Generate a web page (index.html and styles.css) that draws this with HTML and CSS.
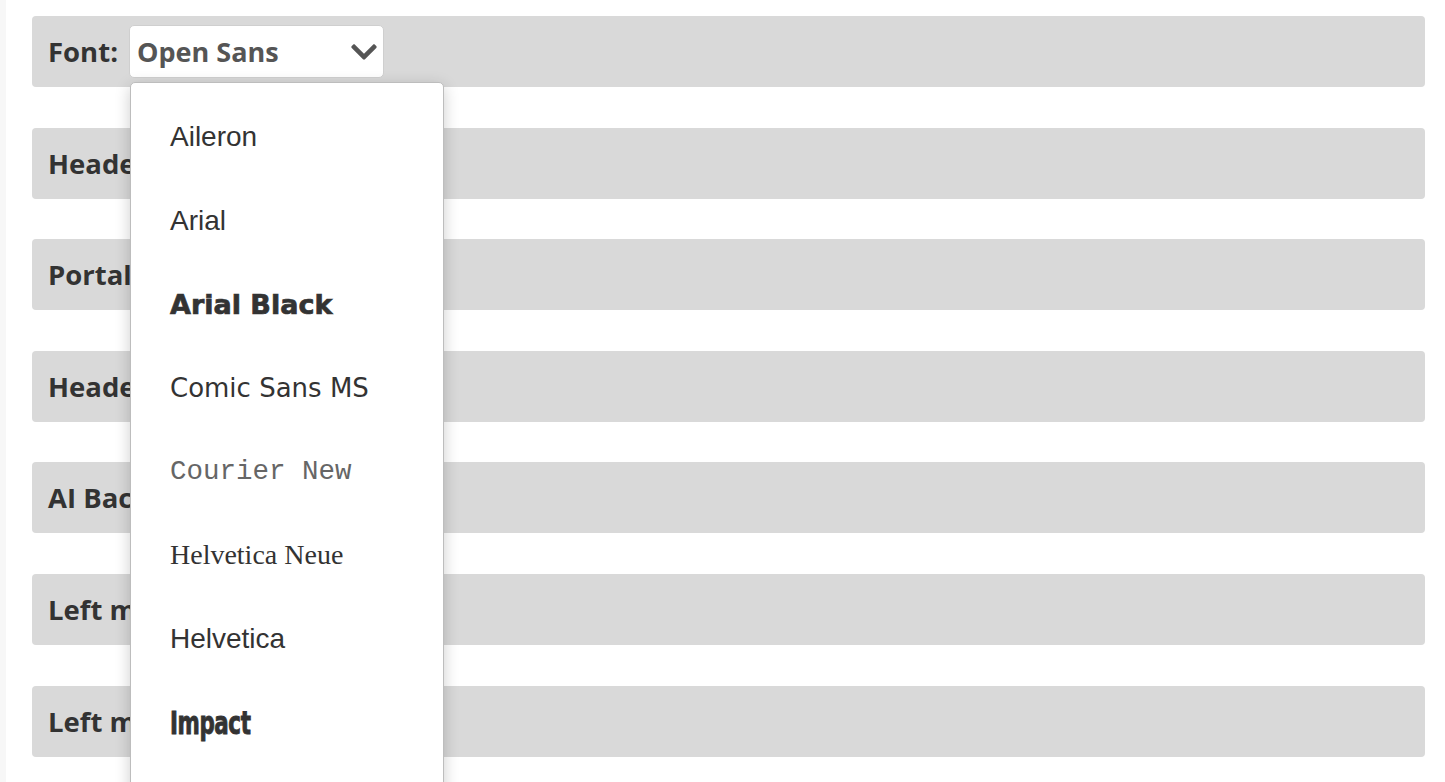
FILE: index.html
```html
<!DOCTYPE html>
<html>
<head>
<meta charset="utf-8">
<link rel="stylesheet" href="styles.css">
</head>
<body>
<div class="panel">
  <div class="row">
    <span class="label">Font:</span>
    <div class="select-wrap">
      <div class="select">
        <span class="select-value">Open Sans</span>
        <svg class="chev" width="26" height="30" viewBox="0 0 448 512"><path fill="#555" d="M207.029 381.476L12.686 187.132c-9.373-9.373-9.373-24.569 0-33.941l22.667-22.667c9.357-9.357 24.522-9.375 33.901-.04L224 284.505l154.745-154.021c9.379-9.335 24.544-9.317 33.901.04l22.667 22.667c9.373 9.373 9.373 24.569 0 33.941L240.971 381.476c-9.373 9.372-24.569 9.372-33.942 0z"/></svg>
      </div>
      <ul class="menu">
        <li class="item f-aileron">Aileron</li>
        <li class="item f-arial">Arial</li>
        <li class="item f-arialblack">Arial Black</li>
        <li class="item f-comic">Comic Sans MS</li>
        <li class="item f-courier">Courier New</li>
        <li class="item f-hneue">Helvetica Neue</li>
        <li class="item f-helvetica">Helvetica</li>
        <li class="item f-impact"><span class="impact-text">Impact</span></li>
      </ul>
    </div>
  </div>
  <div class="row"><span class="label">Header color:</span></div>
  <div class="row"><span class="label">Portal color:</span></div>
  <div class="row"><span class="label">Header text:</span></div>
  <div class="row"><span class="label">AI Background:</span></div>
  <div class="row"><span class="label">Left menu:</span></div>
  <div class="row"><span class="label">Left menu text:</span></div>
</div>
</body>
</html>
```

FILE: styles.css
```css
html, body {
  margin: 0;
  padding: 0;
  background: #f7f7f7;
  height: 100%;
  overflow: hidden;
}
.panel {
  margin-left: 6px;
  background: #ffffff;
  min-height: 100%;
  padding: 16px 20px 0 26px;
  box-sizing: border-box;
}
.row {
  display: flex;
  align-items: center;
  height: 71px;
  margin-bottom: 40.6px;
  background: #d9d9d9;
  border-radius: 4px;
  padding-left: 16px;
  gap: 11px;
}
.label {
  font-family: "Open Sans", sans-serif;
  font-weight: 700;
  font-size: 27.5px;
  color: #333333;
  white-space: nowrap;
}
.select-wrap {
  position: relative;
}
.select {
  width: 255px;
  height: 53px;
  box-sizing: border-box;
  background: #ffffff;
  border: 1px solid #cfcfcf;
  border-radius: 5px;
  display: flex;
  align-items: center;
  justify-content: space-between;
  padding: 0 6px 0 7px;
}
.select-value {
  font-family: "Open Sans", sans-serif;
  font-weight: 700;
  font-size: 27px;
  color: #555555;
}
.chev {
  display: block;
}
.menu {
  position: absolute;
  top: 57px;
  left: 1px;
  width: 314px;
  height: 760px;
  box-sizing: border-box;
  margin: 0;
  padding: 12px 0 0 0;
  list-style: none;
  background: #ffffff;
  border: 1px solid #bdbdbd;
  border-radius: 5px;
  box-shadow: 0 4px 16px rgba(0, 0, 0, 0.2);
  z-index: 10;
}
.item {
  height: 83.7px;
  display: flex;
  align-items: center;
  padding-left: 39px;
  font-size: 28px;
  color: #333333;
  white-space: nowrap;
}
.f-aileron, .f-arial, .f-helvetica {
  font-family: "Liberation Sans", Arial, sans-serif;
}
.f-arialblack {
  font-family: "DejaVu Sans", sans-serif;
  font-weight: 700;
  font-size: 27px;
  -webkit-text-stroke: 0.7px #333333;
}
.f-comic {
  font-family: "Comic Sans MS", "DejaVu Sans", sans-serif;
  font-size: 26px;
}
.f-courier {
  font-family: "Liberation Mono", "Courier New", monospace;
  font-size: 27.5px;
  color: #666666;
}
.f-hneue {
  font-family: "Liberation Serif", "Times New Roman", serif;
}
.f-impact {
  font-family: "DejaVu Sans Condensed", "DejaVu Sans", sans-serif;
  font-weight: 700;
  font-size: 29px;
}
.impact-text {
  display: inline-block;
  transform: scaleX(0.82) scaleY(1.08);
  transform-origin: left center;
  -webkit-text-stroke: 0.8px #333333;
  letter-spacing: -0.5px;
}
```
